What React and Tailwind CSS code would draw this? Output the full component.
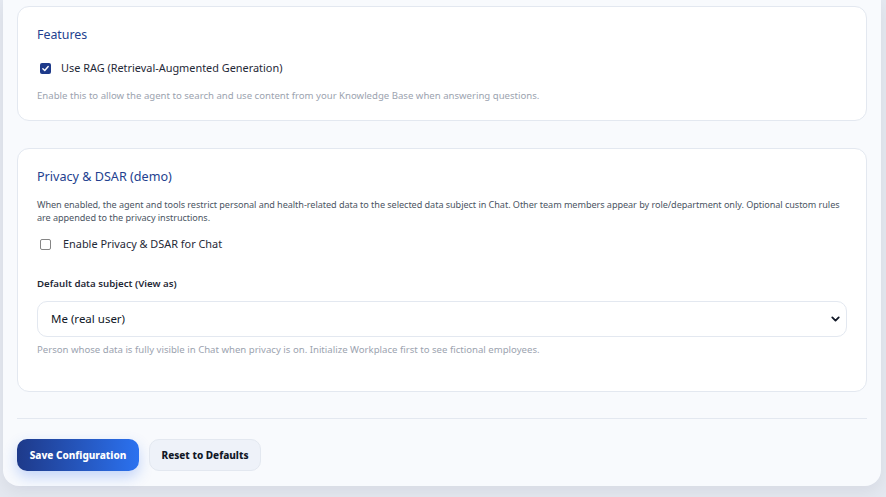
import React, { useState } from "react";

function CheckBox({ checked, onChange }) {
  return (
    <button
      type="button"
      onClick={onChange}
      className={
        checked
          ? "flex h-[11px] w-[11px] items-center justify-center rounded-[2px] bg-[#1e3a8a]"
          : "flex h-[11px] w-[11px] items-center justify-center rounded-[2px] border border-[#858585] bg-white"
      }
    >
      {checked && (
        <svg viewBox="0 0 12 12" className="h-[9px] w-[9px]">
          <path
            d="M2.5 6.3 L5 8.6 L9.6 3.4"
            fill="none"
            stroke="white"
            strokeWidth="1.9"
            strokeLinecap="round"
            strokeLinejoin="round"
          />
        </svg>
      )}
    </button>
  );
}

export default function App() {
  const [useRag, setUseRag] = useState(true);
  const [privacy, setPrivacy] = useState(false);

  return (
    <div
      className="h-[497px] overflow-hidden bg-[#e4e8f0] pl-[3px] pr-[5px] pb-[11px]"
      style={{ fontFamily: '"Noto Sans", "Open Sans", sans-serif' }}
    >
      <div className="flex h-full flex-col rounded-b-[16px] bg-[#f8fafd] px-[14px] pt-[6px] pb-[15px] shadow-[0_6px_16px_rgba(15,23,42,0.06)]">
        {/* Features */}
        <section className="rounded-[12px] border border-[#e3e8f0] bg-white px-[19px] pt-[18px] pb-[17px]">
          <h3 className="text-[12.4px] leading-[20px] font-normal text-[#233f8f]">
            Features
          </h3>
          <label className="mt-[13px] flex h-[20px] items-center gap-[10px] pl-[3px]">
            <CheckBox checked={useRag} onChange={() => setUseRag(!useRag)} />
            <span className="text-[10.9px] text-[#1f2937]">
              Use RAG (Retrieval-Augmented Generation)
            </span>
          </label>
          <p className="mt-[10px] text-[9.6px] leading-[15px] text-[#9ca3af]">
            Enable this to allow the agent to search and use content from your
            Knowledge Base when answering questions.
          </p>
        </section>

        {/* Privacy & DSAR */}
        <section className="mt-[27px] rounded-[12px] border border-[#e3e8f0] bg-white px-[19px] pt-[18px] pb-[34px]">
          <h3 className="text-[12.6px] leading-[20px] font-normal text-[#233f8f]">
            Privacy &amp; DSAR (demo)
          </h3>
          <p className="mt-[11px] text-[9.1px] leading-[13px] tracking-[-0.05px] text-[#4b5563]">
            When enabled, the agent and tools restrict personal and
            health-related data to the selected data subject in Chat. Other
            team members appear by role/department only. Optional custom rules
            are appended to the privacy instructions.
          </p>
          <label className="mt-[10px] flex h-[20px] items-center gap-[12px] pl-[3px]">
            <CheckBox checked={privacy} onChange={() => setPrivacy(!privacy)} />
            <span className="text-[10.9px] text-[#1f2937]">
              Enable Privacy &amp; DSAR for Chat
            </span>
          </label>
          <div className="mt-[22px] text-[9.7px] leading-[15px] font-semibold text-[#1f2937]">
            Default data subject (View as)
          </div>
          <div className="relative mt-[10px]">
            <select className="h-[36px] w-full appearance-none rounded-[10px] border border-[#e3e8f0] bg-white pl-[13px] text-[11.5px] text-[#111827] outline-none">
              <option>Me (real user)</option>
            </select>
            <svg
              viewBox="0 0 12 12"
              className="pointer-events-none absolute top-1/2 right-[6px] h-[11px] w-[11px] -translate-y-1/2"
            >
              <path
                d="M2.5 4.3 L6 7.8 L9.5 4.3"
                fill="none"
                stroke="#111827"
                strokeWidth="2"
                strokeLinecap="round"
                strokeLinejoin="round"
              />
            </svg>
          </div>
          <p className="mt-[5px] text-[9.6px] leading-[15px] text-[#9ca3af]">
            Person whose data is fully visible in Chat when privacy is on.
            Initialize Workplace first to see fictional employees.
          </p>
        </section>

        <div className="mt-[26px] h-px bg-[#e3e8f0]" />

        <div className="mt-[20px] flex gap-[10px]">
          <button className="h-[32px] w-[122px] rounded-[10px] bg-gradient-to-r from-[#1e3a8a] to-[#2b72f0] text-[10px] font-extrabold text-white shadow-[0_6px_14px_rgba(37,99,235,0.25)]">
            Save Configuration
          </button>
          <button className="h-[32px] w-[112px] rounded-[10px] border border-[#e3e8f0] bg-[#eef2f9] text-[10px] font-extrabold text-[#111827]">
            Reset to Defaults
          </button>
        </div>
      </div>
    </div>
  );
}
